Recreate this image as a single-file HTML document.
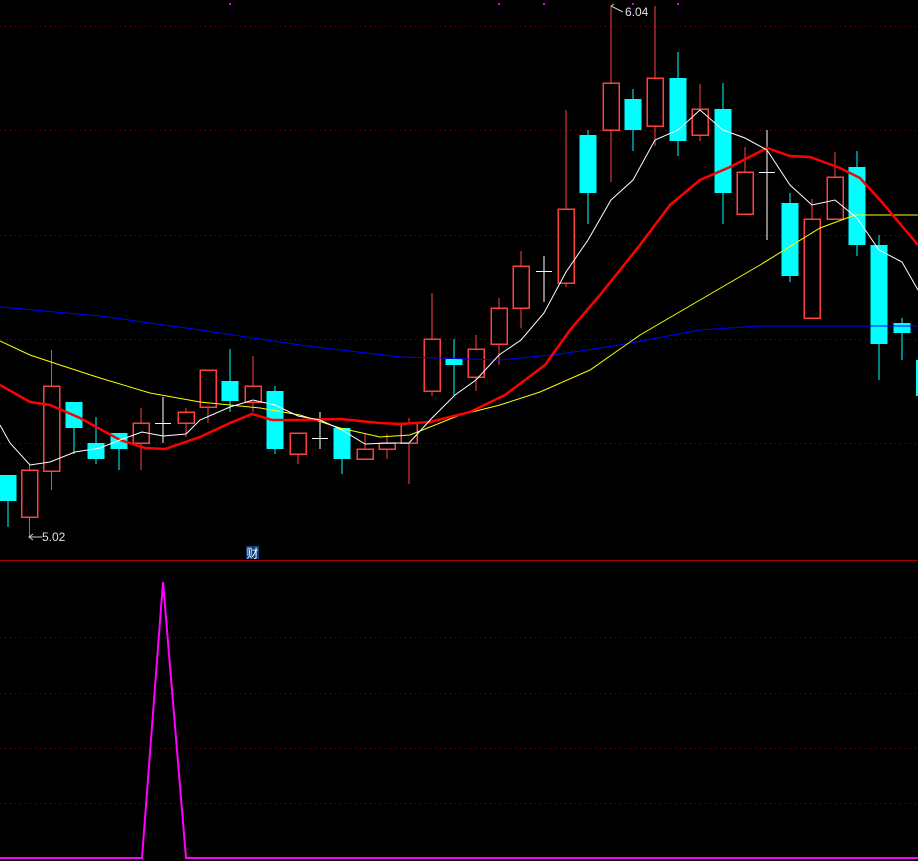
<!DOCTYPE html><html><head><style>body{margin:0;background:#000;width:918px;height:861px;overflow:hidden}svg{display:block}</style></head><body>
<svg width="918" height="861" xmlns="http://www.w3.org/2000/svg" font-family="Liberation Sans, Noto Sans CJK SC, sans-serif">
<rect width="918" height="861" fill="#000"/>
<g stroke="#8b0000" stroke-dasharray="1,4" stroke-width="1">
<line x1="0" y1="26.5" x2="918" y2="26.5"/><line x1="0" y1="130.5" x2="918" y2="130.5"/><line x1="0" y1="235.5" x2="918" y2="235.5"/><line x1="0" y1="339.5" x2="918" y2="339.5"/><line x1="0" y1="443.5" x2="918" y2="443.5"/>
<line x1="0" y1="637.5" x2="918" y2="637.5"/><line x1="0" y1="693.5" x2="918" y2="693.5"/><line x1="0" y1="748.5" x2="918" y2="748.5"/><line x1="0" y1="803.5" x2="918" y2="803.5"/>
</g>
<line x1="0" y1="560.5" x2="918" y2="560.5" stroke="#a00000" stroke-width="1"/>
<g fill="#e000e0"><rect x="229" y="3" width="2" height="2"/><rect x="498" y="3" width="2" height="2"/><rect x="543" y="3" width="2" height="2"/><rect x="632" y="3" width="2" height="2"/><rect x="677" y="3" width="2" height="2"/></g>
<g stroke-width="1" shape-rendering="crispEdges">
<g stroke="#00ffff">
<line x1="8" x2="8" y1="475" y2="527"/><line x1="74" x2="74" y1="402" y2="454"/><line x1="96" x2="96" y1="417" y2="464"/><line x1="119" x2="119" y1="433" y2="470"/><line x1="230" x2="230" y1="349" y2="412"/><line x1="275" x2="275" y1="386" y2="454"/><line x1="342" x2="342" y1="428" y2="474"/><line x1="454" x2="454" y1="339" y2="396"/><line x1="588" x2="588" y1="130" y2="224"/><line x1="633" x2="633" y1="89" y2="151"/><line x1="678" x2="678" y1="52" y2="156"/><line x1="723" x2="723" y1="83" y2="224"/><line x1="790" x2="790" y1="193" y2="282"/><line x1="857" x2="857" y1="151" y2="256"/><line x1="879" x2="879" y1="235" y2="380"/><line x1="902" x2="902" y1="318" y2="360"/>
</g>
<g stroke="#ff4040">
<line x1="29.5" x2="29.5" y1="465" y2="537"/><line x1="51.5" x2="51.5" y1="350" y2="490"/><line x1="141" x2="141" y1="408" y2="470"/><line x1="186" x2="186" y1="408" y2="437"/><line x1="208" x2="208" y1="370" y2="423"/><line x1="253" x2="253" y1="356" y2="412"/><line x1="298" x2="298" y1="433" y2="464"/><line x1="365" x2="365" y1="434" y2="459"/><line x1="387" x2="387" y1="434" y2="459"/><line x1="409" x2="409" y1="418" y2="484"/><line x1="432" x2="432" y1="293" y2="396"/><line x1="476" x2="476" y1="335" y2="391"/><line x1="499" x2="499" y1="298" y2="365"/><line x1="521" x2="521" y1="251" y2="328"/><line x1="566" x2="566" y1="110" y2="287"/><line x1="611" x2="611" y1="6" y2="182"/><line x1="655" x2="655" y1="6" y2="146"/><line x1="700" x2="700" y1="84" y2="141"/><line x1="745" x2="745" y1="147" y2="214"/><line x1="812" x2="812" y1="199" y2="318"/><line x1="835" x2="835" y1="152" y2="219"/>
</g>
<g stroke="#ffffff">
<line x1="163" x2="163" y1="397" y2="443"/><line x1="155" x2="171" y1="423.5" y2="423.5"/>
<line x1="320" x2="320" y1="412" y2="449"/><line x1="312" x2="328" y1="438.5" y2="438.5"/>
<line x1="544" x2="544" y1="256" y2="302"/><line x1="536" x2="552" y1="271.5" y2="271.5"/>
<line x1="767" x2="767" y1="130" y2="240"/><line x1="759" x2="775" y1="172.5" y2="172.5"/>
</g>
<g fill="#00ffff" stroke="none">
<rect x="0" y="475" width="16.5" height="26"/><rect x="65.5" y="402" width="17" height="26"/><rect x="87.5" y="443" width="17" height="16"/><rect x="110.5" y="433" width="17" height="16"/><rect x="221.5" y="381" width="17" height="20"/><rect x="266.5" y="391" width="17" height="58"/><rect x="333.5" y="428" width="17" height="31"/><rect x="445.5" y="359" width="17" height="6"/><rect x="579.5" y="135" width="17" height="58"/><rect x="624.5" y="99" width="17" height="31"/><rect x="669.5" y="78" width="17" height="63"/><rect x="714.5" y="109" width="17" height="84"/><rect x="781.5" y="203" width="17" height="73"/><rect x="848.5" y="167" width="17" height="78"/><rect x="870.5" y="245" width="17" height="99"/><rect x="893.5" y="323" width="17" height="10"/><rect x="916" y="360" width="4" height="36"/>
</g>
<g fill="#000" stroke="#ff4040" stroke-width="1.5">
<rect x="21.5" y="470" width="16" height="47"/><rect x="43.5" y="386" width="16" height="85"/><rect x="133" y="423" width="16" height="20"/><rect x="178" y="412" width="16" height="11"/><rect x="200" y="370" width="16" height="37"/><rect x="245" y="386" width="16" height="16"/><rect x="290" y="433" width="16" height="21"/><rect x="357" y="449" width="16" height="10"/><rect x="379" y="443" width="16" height="6"/><rect x="401" y="423" width="16" height="20"/><rect x="424" y="339" width="16" height="52"/><rect x="468" y="349" width="16" height="28"/><rect x="491" y="308" width="16" height="36"/><rect x="513" y="266" width="16" height="42"/><rect x="558" y="209" width="16" height="74"/><rect x="603" y="83" width="16" height="47"/><rect x="647" y="78" width="16" height="48"/><rect x="692" y="109" width="16" height="26"/><rect x="737" y="172" width="16" height="42"/><rect x="804" y="219" width="16" height="99"/><rect x="827" y="177" width="16" height="42"/>
</g>
</g>
<g fill="none" stroke-width="1">
<polyline stroke="#0000ff" points="0,307 100,316 200,330 300,345 400,357 440,358 500,360 560,354 620,345 700,330 760,326 918,326"/>
<polyline stroke="#ffff00" points="0,341 30,355 60,365 100,378 150,393 200,402 260,408 300,415 340,428 380,437 410,435 460,415 500,405 540,392 590,370 640,335 700,300 760,265 820,228 855,215 918,215"/>
<polyline stroke="#ff0000" stroke-width="2.5" points="0,385 30,402 50,405 80,418 120,440 145,448 165,449 200,437 230,423 252,414 272,420 300,420 340,419 380,423 400,424 430,422 470,412 505,395 545,365 570,330 600,295 640,245 670,205 700,180 730,167 767,148 790,156 810,157 840,168 860,178 880,200 918,245"/>
<polyline stroke="#ffffff" points="0,425 10,443 30,465 50,462 75,452 100,448 120,440 142,432 163,436 186,434 200,420 230,407 253,400 275,405 298,416 320,420 342,430 365,444 387,443 409,443 432,418 455,395 476,380 499,355 521,340 544,313 566,272 588,240 611,200 633,180 655,140 678,130 700,110 723,130 745,138 767,150 790,185 812,205 835,200 857,218 879,250 902,262 918,290"/>
</g>
<text x="42" y="541" fill="#e0e0e0" font-size="12">5.02</text>
<path d="M29 537 H42 M33 534 L29 537 L33 540" stroke="#ccc" fill="none"/>
<text x="625" y="16" fill="#e0e0e0" font-size="12">6.04</text>
<path d="M611 6 L623 12 M611 6 L614 4" stroke="#ccc" fill="none"/>
<rect x="246" y="546" width="13" height="13" fill="#0a3c78"/>
<text x="246.5" y="557.5" fill="#fff" font-size="12">财</text>
<polyline fill="none" stroke="#ff00ff" stroke-width="2" points="0,858 142,858 163,582 186,858 918,858"/>
</svg></body></html>
